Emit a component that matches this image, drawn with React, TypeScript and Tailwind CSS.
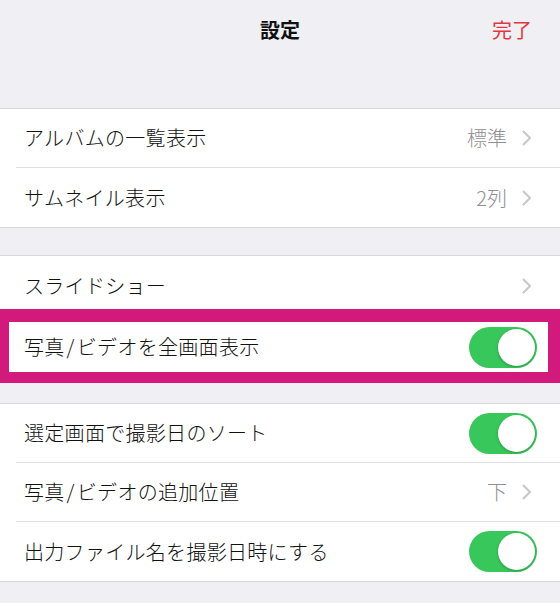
import React from 'react'

type Row = {
  label: React.ReactNode
  value?: string
  chevron?: boolean
  toggle?: boolean
}

const Chevron = () => (
  <svg width="10" height="16" viewBox="0 0 10 16" className="shrink-0">
    <polyline points="1.5,1.5 8,8 1.5,14.5" fill="none" stroke="#c7c7cc" strokeWidth="2" strokeLinecap="round" strokeLinejoin="round" />
  </svg>
)

const Toggle = () => (
  <div className="w-[68px] h-[41px] rounded-full bg-[#38c75b] p-[2px] flex justify-end shrink-0">
    <div className="w-[37px] h-[37px] rounded-full bg-white shadow-[0_1px_3px_rgba(0,0,0,0.25)]" />
  </div>
)

// slash with a bit of air around it, like the iOS font
const Slash = () => <span className="mx-[2px]">/</span>

const RowItem = ({ row, last }: { row: Row; last?: boolean }) => (
  <div className="pl-4">
    <div className={`h-[59px] flex items-center pl-2 pr-[23px] ${last ? '' : 'border-b border-[#e0e0e4]'}`}>
      <span className="flex-1 text-[20px] text-[#111] tracking-[0.3px]">{row.label}</span>
      {row.value && <span className="text-[20px] text-[#8e8e93] mr-[15px]">{row.value}</span>}
      {row.chevron && <span className="pr-[5px]"><Chevron /></span>}
      {row.toggle && <Toggle />}
    </div>
  </div>
)

const App = () => {
  const group1: Row[] = [
    { label: 'アルバムの一覧表示', value: '標準', chevron: true },
    { label: 'サムネイル表示', value: '2列', chevron: true },
  ]
  const group3: Row[] = [
    { label: '選定画面で撮影日のソート', toggle: true },
    { label: <>写真<Slash />ビデオの追加位置</>, value: '下', chevron: true },
    { label: '出力ファイル名を撮影日時にする', toggle: true },
  ]

  return (
    <div className="w-[560px] h-[603px] bg-[#efeff4] overflow-hidden font-['Noto_Sans_CJK_JP','Noto_Sans',sans-serif] font-light leading-none">
      <div className="h-[60px] grid grid-cols-3 items-center">
        <div />
        <p className="text-center text-[20px] font-bold text-[#111]">設定</p>
        <p className="text-right pr-[28px] text-[20px] font-normal text-[#e0383e]">完了</p>
      </div>

      <div className="mt-[48px] bg-white border-y border-[#d8d8dc]">
        {group1.map((row, i) => (
          <RowItem key={i} row={row} last={i === group1.length - 1} />
        ))}
      </div>

      <div className="mt-[27px] bg-white border-t border-[#d8d8dc]">
        <div className="h-[53px] flex items-center pl-6 pr-[28px] pt-[6px]">
          <span className="flex-1 text-[20px] text-[#111] tracking-[0.3px]">スライドショー</span>
          <Chevron />
        </div>
      </div>
      <div className="bg-[#d2197c] pt-[13px] pb-[11px] pl-[9px] pr-[12px]">
        <div className="h-[50px] bg-white flex items-center pl-[15px] pr-[11px]">
          <span className="flex-1 text-[20px] text-[#111] tracking-[0.3px]">写真<Slash />ビデオを全画面表示</span>
          <Toggle />
        </div>
      </div>

      <div className="mt-[20px] bg-white border-y border-[#d8d8dc]">
        {group3.map((row, i) => (
          <RowItem key={i} row={row} last={i === group3.length - 1} />
        ))}
      </div>
    </div>
  )
}

export default App
